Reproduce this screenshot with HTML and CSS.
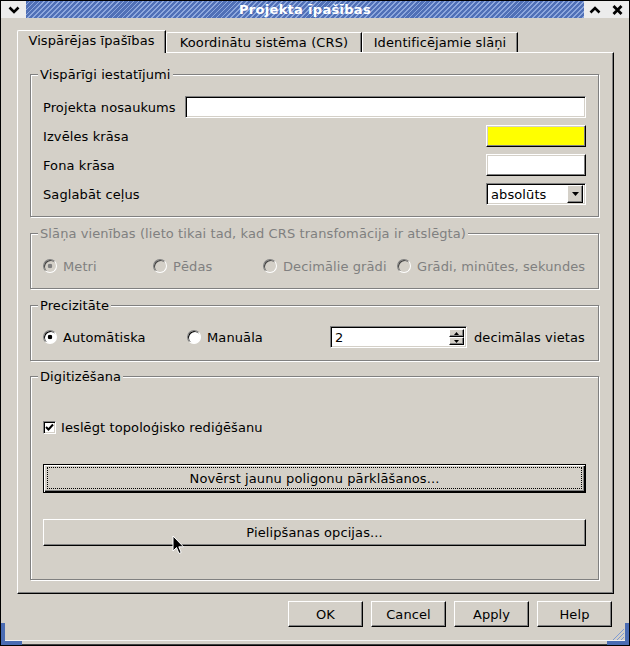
FILE: index.html
```html
<!DOCTYPE html>
<html lang="lv">
<head>
<meta charset="utf-8">
<title>Projekta īpašības</title>
<link rel="stylesheet" href="styles.css">
</head>
<body>
<div class="window">
  <header class="titlebar">
    <div class="tb-btn tb-menu">
      <svg width="12" height="8" viewBox="0 0 12 8"><path d="M1.5 1.5 L6 6 L10.5 1.5" fill="none" stroke="#000" stroke-width="2.6"/></svg>
    </div>
    <div class="tb-title">Projekta īpašības</div>
    <div class="tb-btn tb-shade">
      <svg width="12" height="8" viewBox="0 0 12 8"><path d="M1.5 6.5 L6 2 L10.5 6.5" fill="none" stroke="#000" stroke-width="2.6"/></svg>
    </div>
    <div class="tb-btn tb-close">
      <svg width="11" height="10" viewBox="0 0 11 10"><path d="M1.5 1 L9.5 9 M9.5 1 L1.5 9" stroke="#000" stroke-width="2.8"/></svg>
    </div>
  </header>

  <div class="dialog">
    <div class="tabbar">
      <div class="tab tab-general active">Vispārējas īpašības</div>
      <div class="tab tab-crs">Koordinātu sistēma (CRS)</div>
      <div class="tab tab-layers">Identificējamie slāņi</div>
    </div>

    <div class="panel">
      <fieldset class="group g-general">
        <legend>Vispārīgi iestatījumi</legend>
        <div class="form">
          <span class="label">Projekta nosaukums</span>
          <div class="lineedit"></div>
          <span class="label">Izvēles krāsa</span>
          <div class="colorbtn swatch-yellow"></div>
          <span class="label">Fona krāsa</span>
          <div class="colorbtn swatch-white"></div>
          <span class="label">Saglabāt ceļus</span>
          <div class="combo">
            <span class="combo-text">absolūts</span>
            <span class="combo-btn">
              <svg width="7" height="4" viewBox="0 0 7 4"><path d="M0 0 H7 L3.5 4 Z" fill="#000"/></svg>
            </span>
          </div>
        </div>
      </fieldset>

      <fieldset class="group g-units disabled">
        <legend>Slāņa vienības (lieto tikai tad, kad CRS transfomācija ir atslēgta)</legend>
        <div class="units-row">
          <span class="radio checked">Metri</span>
          <span class="radio">Pēdas</span>
          <span class="radio">Decimālie grādi</span>
          <span class="radio">Grādi, minūtes, sekundes</span>
        </div>
      </fieldset>

      <fieldset class="group g-precision">
        <legend>Precizitāte</legend>
        <div class="precision-row">
          <span class="radio checked">Automātiska</span>
          <span class="radio">Manuāla</span>
          <div class="spinbox">
            <span class="spin-text">2</span>
            <span class="spin-btns">
              <span class="spin-btn"><svg width="5" height="3" viewBox="0 0 5 3"><path d="M0 3 H5 L2.5 0 Z" fill="#000"/></svg></span>
              <span class="spin-btn"><svg width="5" height="3" viewBox="0 0 5 3"><path d="M0 0 H5 L2.5 3 Z" fill="#000"/></svg></span>
            </span>
          </div>
          <span class="spin-suffix">decimālas vietas</span>
        </div>
      </fieldset>

      <fieldset class="group g-digitize">
        <legend>Digitizēšana</legend>
        <label class="checkbox-row">
          <span class="checkbox">
            <svg width="9" height="9" viewBox="0 0 9 9"><path d="M1 4 L3.5 6.5 L8 1.5" fill="none" stroke="#000" stroke-width="2"/></svg>
          </span>
          Ieslēgt topoloģisko rediģēšanu
        </label>
        <button class="btn btn-wide btn-default" type="button"><span class="focus">Novērst jaunu poligonu pārklāšanos...</span></button>
        <button class="btn btn-wide btn-snap" type="button">Pielipšanas opcijas...</button>
      </fieldset>
    </div>

    <div class="actions">
      <button class="btn" type="button">OK</button>
      <button class="btn" type="button">Cancel</button>
      <button class="btn" type="button">Apply</button>
      <button class="btn" type="button">Help</button>
    </div>
  </div>

  <svg class="grip grip-left" width="22" height="22" viewBox="0 0 22 22"><path d="M0 0 H4 V18 H21 V22 H0 Z" fill="#4a6cb3"/></svg>
  <svg class="grip grip-right" width="22" height="22" viewBox="0 0 22 22">
    <path d="M18 0 H22 V22 H0 V18 H18 Z" fill="#4a6cb3"/>
    <path d="M6 17 L17 6 M10 17 L17 10 M14 17 L17 14" stroke="#7f9bd3" stroke-width="1"/>
  </svg>

  <svg class="cursor" width="13" height="20" viewBox="0 0 13 20"><path d="M1 1 V16 L4.5 12.5 L7 18.5 L9.2 17.5 L6.8 11.8 L11.5 11.8 Z" fill="#000" stroke="#fff" stroke-width="1" stroke-linejoin="miter"/></svg>
</div>
</body>
</html>
```

FILE: styles.css
```css
* { box-sizing: border-box; }

html, body { margin: 0; padding: 0; }

body {
  width: 630px;
  height: 646px;
  overflow: hidden;
  background: #d4d0c8;
  font-family: "DejaVu Sans", "Liberation Sans", sans-serif;
  font-size: 13px;
  line-height: 15px;
  letter-spacing: 0.1px;
  color: #000;
}

/* ---------- window frame ---------- */
.window {
  position: relative;
  width: 630px;
  height: 646px;
  border: 1px solid #000;
  background: #d4d0c8;
  display: flex;
  flex-direction: column;
  box-shadow: inset 0 -1px 0 #404040, inset 0 -4px 0 #d4d0c8, inset 0 -5px 0 #f4f4f4;
}

.titlebar {
  flex: none;
  height: 17px;
  display: flex;
}

.tb-btn {
  flex: none;
  display: flex;
  align-items: center;
  justify-content: center;
  background: #ececec;
}
.tb-menu { width: 25px; }
.tb-shade { width: 22px; }
.tb-close { width: 23px; }

.tb-title {
  flex: 1;
  display: flex;
  align-items: center;
  justify-content: center;
  background: repeating-linear-gradient(135deg, #5070b7 0 2.2px, #8ea8dd 2.2px 3.5px);
  color: #fff;
  font-weight: bold;
  letter-spacing: 0.3px;
}

/* ---------- dialog body ---------- */
.dialog {
  flex: 1;
  display: flex;
  flex-direction: column;
  padding: 12px 15px 18px 16px;
}

.tabbar {
  flex: none;
  height: 22px;
  display: flex;
  align-items: flex-end;
}

.tab {
  height: 20px;
  display: flex;
  align-items: center;
  justify-content: center;
  white-space: nowrap;
  border: 1px solid #fff;
  border-bottom: 0;
  border-right-color: #000;
  border-top-left-radius: 2px;
  box-shadow: inset -1px 0 0 #808080;
}
.tab-general { width: 149px; }
.tab-crs { width: 196px; }
.tab-layers { width: 156px; }

.tab.active {
  height: 23px;
  margin-bottom: -1px;
  padding-bottom: 3px;
  position: relative;
  z-index: 1;
  background: #d4d0c8;
}

.panel {
  flex: 1;
  display: flex;
  flex-direction: column;
  padding: 14px 14px 0 12px;
  border: 1px solid #fff;
  border-right-color: #000;
  border-bottom-color: #000;
  box-shadow: inset -1px -1px 0 #808080;
}

/* ---------- group boxes ---------- */
.group {
  margin: 0;
  padding: 0 12px;
  min-width: 0;
  border: 1px solid #808080;
  box-shadow: inset 1px 1px 0 #fff, 1px 1px 0 #fff;
}

.group legend {
  margin-left: -5px;
  padding: 0 2px;
  line-height: 15px;
  background: #d4d0c8;
}

.g-general { padding-top: 14px; padding-bottom: 11px; }
.g-units { margin-top: 9px; padding-top: 16px; padding-bottom: 13px; }
.g-precision { margin-top: 9px; padding-top: 13px; padding-bottom: 12px; }
.g-digitize { margin-top: 8px; padding-top: 35px; padding-bottom: 33px; }

.disabled,
.disabled legend { color: #808080; }

/* ---------- bevels ---------- */
.lineedit,
.combo,
.spinbox {
  background: #fff;
  border: 1px solid;
  border-color: #808080 #fff #fff #808080;
  box-shadow: inset 1px 1px 0 #000, inset -1px -1px 0 #d4d0c8;
}

/* ---------- general form ---------- */
.form {
  display: grid;
  grid-template-columns: 142px 1fr;
  grid-auto-rows: 22px;
  row-gap: 7px;
  align-items: center;
}

.label { white-space: nowrap; }

.lineedit { height: 22px; }

.colorbtn {
  justify-self: end;
  width: 100px;
  height: 22px;
  border: 1px solid;
  border-color: #fff #000 #000 #fff;
  box-shadow: inset -1px -1px 0 #808080, inset 1px 1px 0 #d4d0c8;
}
.swatch-yellow { background: #ffff00; }
.swatch-white { background: #fff; }

.combo {
  justify-self: end;
  width: 100px;
  height: 22px;
  display: flex;
  align-items: center;
  padding: 2px;
}
.combo-text { flex: 1; padding-left: 2px; }
.combo-btn,
.spin-btn {
  flex: none;
  display: flex;
  align-items: center;
  justify-content: center;
  background: #d4d0c8;
  border: 1px solid;
  border-color: #fff #000 #000 #fff;
  box-shadow: inset -1px -1px 0 #808080;
}
.combo-btn { width: 16px; height: 18px; }

/* ---------- radios & checkbox ---------- */
.units-row {
  display: grid;
  grid-template-columns: 110px 110px 134px 1fr;
  height: 18px;
  align-items: center;
}

.precision-row {
  display: grid;
  grid-template-columns: 144px 143px 137px auto;
  height: 22px;
  align-items: center;
}

.radio {
  display: flex;
  align-items: center;
  gap: 6px;
  white-space: nowrap;
}
.radio::before {
  content: "";
  flex: none;
  width: 12px;
  height: 12px;
  border-radius: 50%;
  border: 1px solid;
  border-color: #808080 #fff #fff #808080;
  box-shadow: inset 1px 1px 0 #000;
  background: #fff;
}
.radio.checked::before {
  background: radial-gradient(circle at 50% 50%, #000 0 2px, #fff 2.6px);
}
.disabled .radio::before {
  background: #d4d0c8;
  box-shadow: inset 1px 1px 0 #404040;
}
.disabled .radio.checked::before {
  background: radial-gradient(circle at 50% 50%, #808080 0 2px, #d4d0c8 2.6px);
}

.spinbox {
  height: 22px;
  display: flex;
  align-items: stretch;
  padding: 2px;
}
.spin-text { flex: 1; padding-left: 2px; line-height: 18px; }
.spin-btns {
  flex: none;
  width: 15px;
  display: flex;
  flex-direction: column;
}
.spin-btn { flex: 1; }

.spin-suffix { margin-left: 7px; white-space: nowrap; }

.checkbox-row {
  display: flex;
  align-items: center;
  gap: 5px;
  height: 17px;
}
.checkbox {
  flex: none;
  width: 13px;
  height: 13px;
  display: flex;
  align-items: center;
  justify-content: center;
  background: #fff;
  border: 1px solid;
  border-color: #808080 #fff #fff #808080;
  box-shadow: inset 1px 1px 0 #000, inset -1px -1px 0 #d4d0c8;
}

/* ---------- push buttons ---------- */
.btn {
  display: flex;
  align-items: center;
  justify-content: center;
  padding: 0;
  margin: 0;
  font: inherit;
  letter-spacing: inherit;
  color: #000;
  background: #d4d0c8;
  border: 1px solid;
  border-color: #fff #000 #000 #fff;
  box-shadow: inset -1px -1px 0 #808080;
  cursor: default;
}

.btn-wide { width: 100%; height: 27px; }

.btn-default {
  height: 29px;
  margin-top: 28px;
  padding: 2px 3px 3px 3px;
  border-color: #000;
  box-shadow: inset 1px 1px 0 #fff, inset -1px -1px 0 #000, inset -2px -2px 0 #808080;
}
.btn-default .focus {
  flex: 1;
  align-self: stretch;
  display: flex;
  align-items: center;
  justify-content: center;
  border: 1px dotted #000;
}

.btn-snap { margin-top: 26px; }

.actions {
  flex: none;
  display: flex;
  justify-content: flex-end;
  gap: 8px;
  margin-top: 7px;
  padding-right: 2px;
}
.actions .btn { width: 75px; height: 26px; }

/* ---------- overlays: resize grips and pointer ---------- */
.grip { position: absolute; bottom: 0; }
.grip-left { left: 0; }
.grip-right { right: 0; }

.cursor {
  position: absolute;
  left: 171px;
  top: 534px;
}
```
